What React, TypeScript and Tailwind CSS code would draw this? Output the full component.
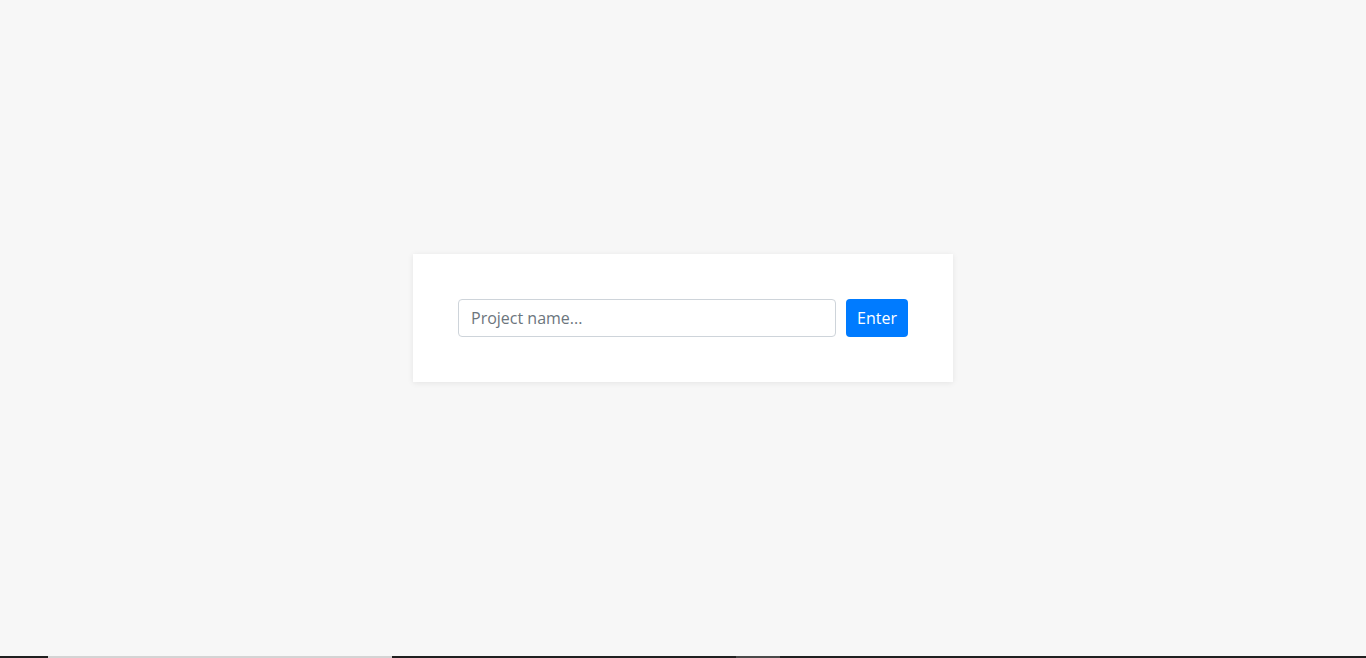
import { useState } from 'react'

export default function App() {
  const [name, setName] = useState('')

  return (
    <div className="h-screen flex flex-col bg-[#f7f7f7] font-['Open_Sans','Noto_Sans',sans-serif]">
      <main className="flex-1 flex items-start justify-center pt-[254px]">
        <div className="w-[540px] bg-white p-[45px] shadow-[0_1px_6px_rgba(0,0,0,0.08)] flex gap-[10px]">
          <input
            value={name}
            onChange={e => setName(e.target.value)}
            placeholder="Project name..."
            className="flex-1 h-[38px] px-3 rounded border border-[#ced4da] text-base text-[#495057] placeholder:text-[#6c757d] outline-none"
          />
          <button className="h-[38px] w-[62px] rounded bg-[#007bff] text-white text-base">
            Enter
          </button>
        </div>
      </main>
      <div className="h-[2px] flex bg-[#202020]">
        <div className="w-[48px]" />
        <div className="w-[344px] bg-[#d4d4d4]" />
        <div className="w-[344px]" />
        <div className="w-[44px] bg-[#4a4a4a]" />
      </div>
    </div>
  )
}
